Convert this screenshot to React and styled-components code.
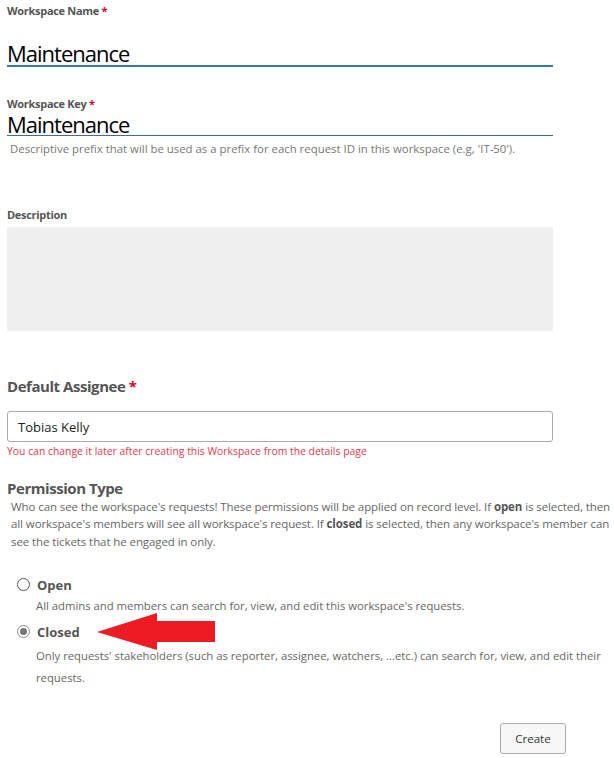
import React from "react";
import styled, { createGlobalStyle } from "styled-components";

const Global = createGlobalStyle`
  html, body { margin: 0; padding: 0; background: #fff; }
  body { font-family: "Open Sans", "Noto Sans", sans-serif; }
`;

const Page = styled.div`
  width: 614px;
  height: 758px;
  padding: 0 0 0 7px;
  box-sizing: border-box;
  position: relative;
  overflow: hidden;
`;

const Field = styled.div`
  width: 546px;
  display: flex;
  flex-direction: column;
  margin-top: ${(p) => p.$mt || 0}px;
`;

const Label = styled.div`
  font-size: 11px;
  font-weight: 700;
  color: #555;
  line-height: 13px;
  letter-spacing: -0.3px;
`;

const Star = styled.span`
  color: #e0002a;
`;

const BigInput = styled.div`
  font-size: 22px;
  letter-spacing: -1px;
  color: #000;
  line-height: ${(p) => p.$lh}px;
  height: ${(p) => p.$h}px;
  display: flex;
  align-items: flex-end;
  border-bottom: ${(p) => (p.$focus ? "2px solid #2b7bb9" : "1px solid #3b6f95")};
  box-sizing: border-box;
`;

const Helper = styled.div`
  font-size: 11.4px;
  color: #777;
  line-height: 14px;
  margin-top: ${(p) => p.$mt || 0}px;
  padding-left: ${(p) => p.$pl || 0}px;
  white-space: nowrap;
`;

const TextArea = styled.div`
  background: #efefef;
  height: 104px;
  margin-top: 6px;
`;

const Heading = styled.div`
  font-size: 15px;
  font-weight: 700;
  color: #555;
  line-height: 20px;
  letter-spacing: -0.45px;
`;

const SelectBox = styled.div`
  height: 31px;
  border: 1px solid #aaa;
  border-radius: 3px;
  box-sizing: border-box;
  display: flex;
  align-items: center;
  padding-left: 10px;
  font-size: 13px;
  color: #222;
  margin-top: 15px;
`;

const ErrorText = styled.div`
  font-size: 10.4px;
  color: #e8364f;
  line-height: 14px;
  margin-top: 2px;
  white-space: nowrap;
`;

const Para = styled.div`
  font-size: 11.5px;
  letter-spacing: -0.09px;
  color: #666;
  line-height: 17.3px;
  padding-left: 4px;
  width: 610px;
  white-space: nowrap;
  b { color: #555; }
`;

const Options = styled.div`
  display: flex;
  flex-direction: column;
  margin-top: 26px;
  padding-left: 10px;
`;

const Option = styled.div`
  display: flex;
  flex-direction: column;
  margin-top: ${(p) => p.$mt || 0}px;
`;

const OptionRow = styled.div`
  display: flex;
  align-items: center;
  gap: 7px;
`;

const Radio = styled.span`
  width: 13px;
  height: 13px;
  border-radius: 50%;
  border: 1px solid ${(p) => (p.$checked ? "#888" : "#555")};
  box-sizing: border-box;
  display: inline-flex;
  align-items: center;
  justify-content: center;
  background: #fff;
  &::after {
    content: "";
    display: ${(p) => (p.$checked ? "block" : "none")};
    width: 7px;
    height: 7px;
    border-radius: 50%;
    background: #777;
  }
`;

const OptionLabel = styled.span`
  font-size: 13px;
  font-weight: 700;
  color: #555;
  line-height: 18px;
`;

const OptionDesc = styled.div`
  font-size: 11.3px;
  color: #666;
  line-height: 22px;
  padding-left: 19px;
  margin-top: ${(p) => p.$mt ?? 1}px;
  white-space: nowrap;
`;

const Footer = styled.div`
  width: 559px;
  display: flex;
  justify-content: flex-end;
  margin-top: 34px;
`;

const Button = styled.button`
  width: 66px;
  height: 31px;
  border: 1px solid #aaa;
  border-radius: 3px;
  background: #f7f7f7;
  font-family: inherit;
  font-size: 11.5px;
  color: #333;
  padding: 0;
`;

const Arrow = styled.svg`
  position: absolute;
  left: 96px;
  top: 612px;
`;

export default function App() {
  return (
    <>
      <Global />
      <Page>
        <Field $mt={4}>
          <Label>
            Workspace Name <Star>*</Star>
          </Label>
          <BigInput $h={50} $lh={24} $focus>Maintenance</BigInput>
        </Field>
        <Field $mt={30}>
          <Label>
            Workspace Key <Star>*</Star>
          </Label>
          <BigInput $h={26} $lh={22}>Maintenance</BigInput>
          <Helper $mt={6} $pl={3}>
            Descriptive prefix that will be used as a prefix for each request ID in this workspace (e.g, 'IT-50').
          </Helper>
        </Field>
        <Field $mt={52}>
          <Label>Description</Label>
          <TextArea />
        </Field>
        <Field $mt={45}>
          <Heading>
            Default Assignee <Star>*</Star>
          </Heading>
          <SelectBox>Tobias Kelly</SelectBox>
          <ErrorText>You can change it later after creating this Workspace from the details page</ErrorText>
        </Field>
        <Field $mt={20}>
          <Heading>Permission Type</Heading>
        </Field>
        <Para>
          Who can see the workspace's requests! These permissions will be applied on record level. If <b>open</b> is selected, then
          <br />
          all workspace's members will see all workspace's request. If <b>closed</b> is selected, then any workspace's member can
          <br />
          see the tickets that he engaged in only.
        </Para>
        <Options>
          <Option>
            <OptionRow>
              <Radio />
              <OptionLabel>Open</OptionLabel>
            </OptionRow>
            <OptionDesc>All admins and members can search for, view, and edit this workspace's requests.</OptionDesc>
          </Option>
          <Option $mt={6}>
            <OptionRow>
              <Radio $checked />
              <OptionLabel>Closed</OptionLabel>
            </OptionRow>
            <OptionDesc $mt={4}>
              Only requests' stakeholders (such as reporter, assignee, watchers, ...etc.) can search for, view, and edit their
              <br />
              requests.
            </OptionDesc>
          </Option>
        </Options>
        <Footer>
          <Button>Create</Button>
        </Footer>
        <Arrow width="122" height="40" viewBox="0 0 122 40">
          <polygon points="1,20 61,1 61,9 119,9 119,30 61,30 61,38" fill="#ed1c24" />
        </Arrow>
      </Page>
    </>
  );
}
